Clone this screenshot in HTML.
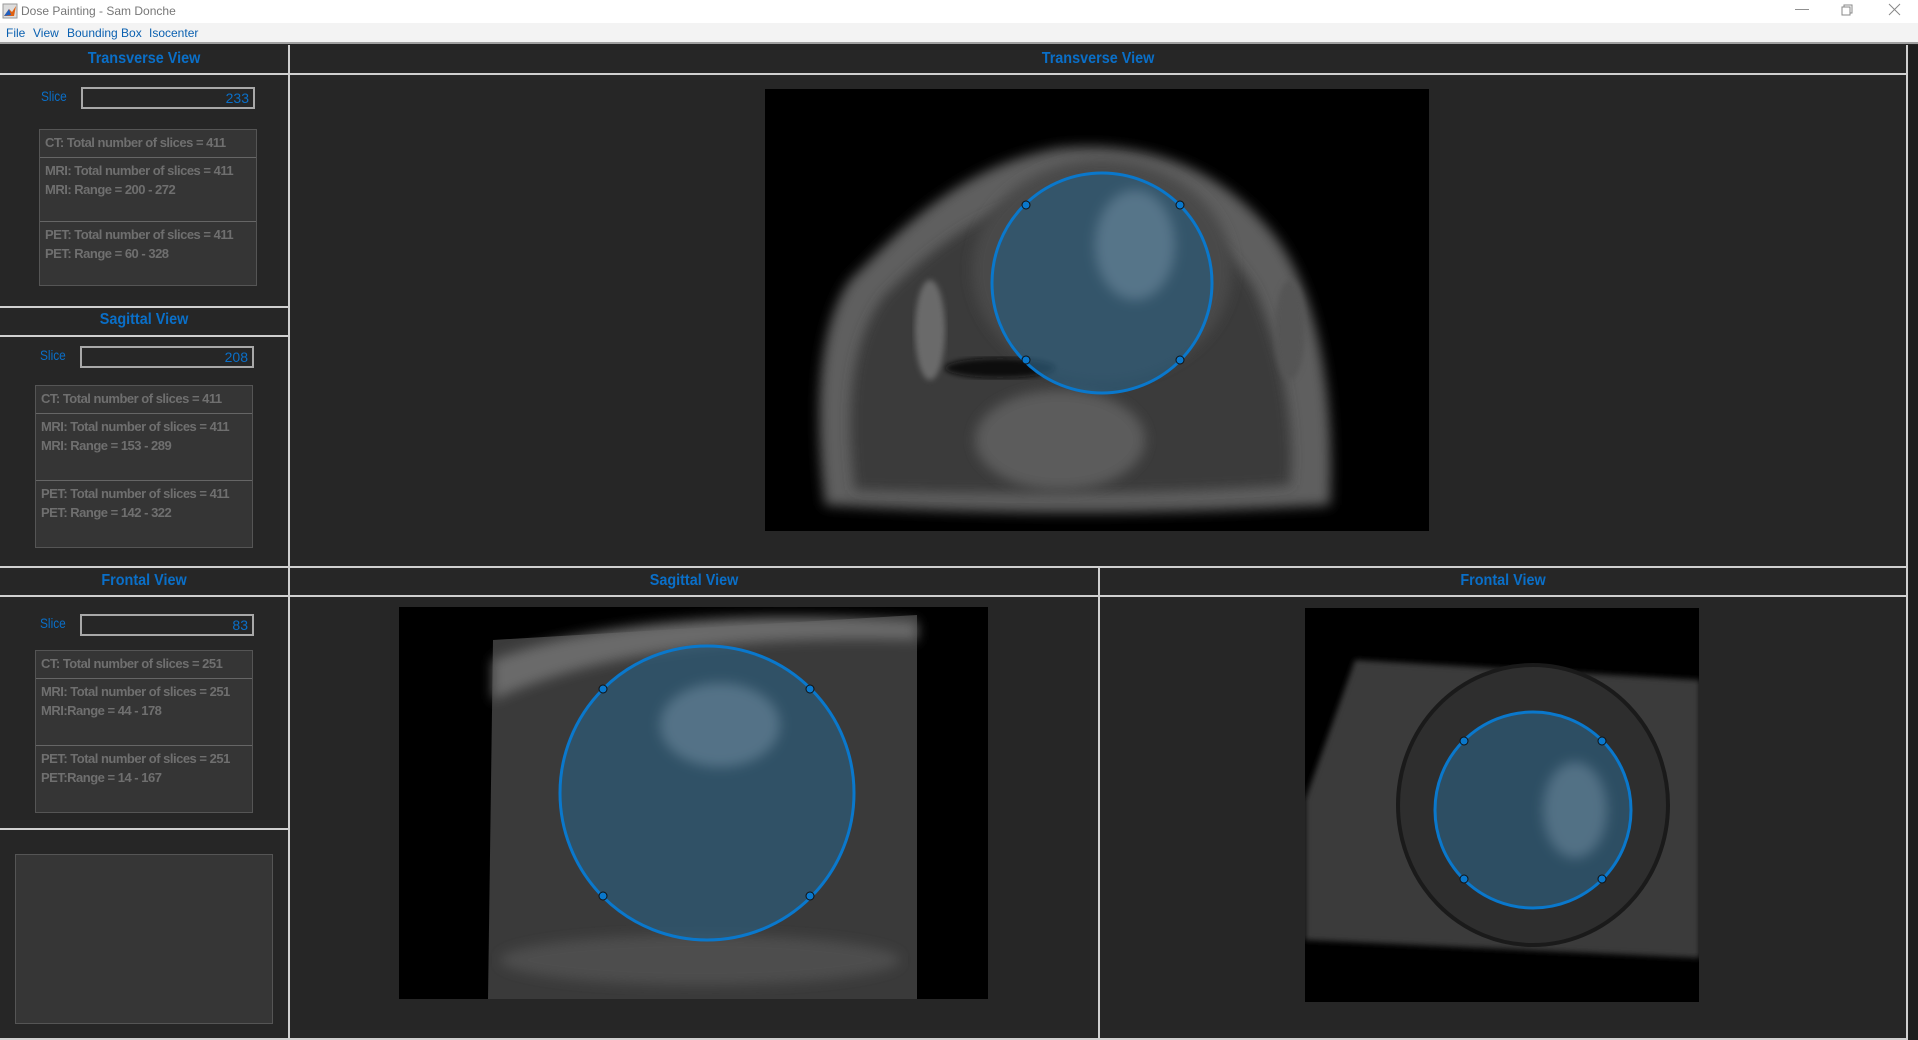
<!DOCTYPE html>
<html><head><meta charset="utf-8"><style>
*{margin:0;padding:0;box-sizing:border-box}
body{width:1918px;height:1040px;background:#262626;position:relative;overflow:hidden;font-family:"Liberation Sans",sans-serif}
.abs{position:absolute}
.title{left:0;top:0;width:1918px;height:23px;background:#fff;font-size:12px;color:#777;}
.menu{left:0;top:23px;width:1918px;height:21px;background:#f3f3f3;border-bottom:2px solid #a0a0a0;font-size:12px;color:#0a60b0}
.hl{position:absolute;height:2px;background:#d0d0d0}
.vl{position:absolute;width:2px;background:#d0d0d0}
.hdr{position:absolute;color:#0a6fc8;font-weight:bold;font-size:16px;text-align:center;transform:scaleX(0.9)}
.slice{position:absolute;color:#0a6fc8;font-size:14px;transform:scaleX(.85);transform-origin:left}
.inp{position:absolute;border:2px solid #a8a8a8;color:#0a6fc8;font-size:14px;text-align:right;padding-right:4px;line-height:18px}
.box{position:absolute;background:#353535;border:1px solid #555;color:#6f6f6f;font-weight:bold;font-size:13px;}
.box div{border-bottom:1px solid #666;padding:3px 0 0 5px;line-height:19px;white-space:nowrap;letter-spacing:-.5px}
.box div:last-child{border-bottom:none}
</style></head><body>
<div class="abs title"><svg class="abs" style="left:2px;top:3px" width="16" height="16"><rect x="1" y="1" width="14" height="14" fill="#ddd" stroke="#999"/><path d="M2 13 L7 6 L10 9 L14 3 L12 13Z" fill="#e06010"/><path d="M2 13 L7 6 L9 12Z" fill="#2060c0"/></svg><span class="abs" style="left:21px;top:4px">Dose Painting - Sam Donche</span>
<span class="abs" style="left:1795px;top:0;font-size:14px;color:#888">—</span>
<svg class="abs" style="left:1841px;top:4px" width="12" height="12"><rect x="1" y="3" width="8" height="8" fill="none" stroke="#888"/><path d="M3 3V1H11V9H9" fill="none" stroke="#888"/></svg>
<svg class="abs" style="left:1888px;top:3px" width="13" height="13"><path d="M1 1L12 12M12 1L1 12" stroke="#888"/></svg></div>
<div class="abs menu"><span class="abs" style="left:6px;top:3px">File</span><span class="abs" style="left:33px;top:3px">View</span><span class="abs" style="left:67px;top:3px">Bounding Box</span><span class="abs" style="left:149px;top:3px">Isocenter</span></div>

<div class="vl" style="left:288px;top:45px;height:995px"></div>
<div class="vl" style="left:1906px;top:45px;height:995px"></div>
<div class="vl" style="left:1098px;top:566px;height:474px"></div>
<div class="hl" style="left:0;top:73px;width:1908px"></div>
<div class="hl" style="left:0;top:306px;width:289px"></div>
<div class="hl" style="left:0;top:335px;width:289px"></div>
<div class="hl" style="left:0;top:566px;width:1908px"></div>
<div class="hl" style="left:0;top:595px;width:1908px"></div>
<div class="hl" style="left:0;top:828px;width:289px"></div>
<div class="hl" style="left:0;top:1038px;width:1908px"></div>
<div class="abs" style="left:1908px;top:45px;width:10px;height:995px;background:#1e1e1e"></div>

<div class="hdr" style="left:0;top:50px;width:288px">Transverse View</div>
<div class="hdr" style="left:0;top:311px;width:288px">Sagittal View</div>
<div class="hdr" style="left:0;top:572px;width:288px">Frontal View</div>
<div class="hdr" style="left:290px;top:50px;width:1616px">Transverse View</div>
<div class="hdr" style="left:290px;top:572px;width:808px">Sagittal View</div>
<div class="hdr" style="left:1100px;top:572px;width:806px">Frontal View</div>

<div class="slice" style="left:41px;top:88px">Slice</div>
<div class="inp" style="left:81px;top:87px;width:174px;height:22px">233</div>
<div class="box" style="left:39px;top:129px;width:218px;height:157px"><div style="height:28px">CT: Total number of slices = 411</div><div style="height:64px">MRI: Total number of slices = 411<br>MRI: Range = 200 - 272</div><div>PET: Total number of slices = 411<br>PET: Range = 60 - 328</div></div>

<div class="slice" style="left:40px;top:347px">Slice</div>
<div class="inp" style="left:80px;top:346px;width:174px;height:22px">208</div>
<div class="box" style="left:35px;top:385px;width:218px;height:163px"><div style="height:28px">CT: Total number of slices = 411</div><div style="height:67px">MRI: Total number of slices = 411<br>MRI: Range = 153 - 289</div><div>PET: Total number of slices = 411<br>PET: Range = 142 - 322</div></div>

<div class="slice" style="left:40px;top:615px">Slice</div>
<div class="inp" style="left:80px;top:614px;width:174px;height:22px">83</div>
<div class="box" style="left:35px;top:650px;width:218px;height:163px"><div style="height:28px">CT: Total number of slices = 251</div><div style="height:67px">MRI: Total number of slices = 251<br>MRI:Range = 44 - 178</div><div>PET: Total number of slices = 251<br>PET:Range = 14 - 167</div></div>

<div class="abs" style="left:15px;top:854px;width:258px;height:170px;background:#363636;border:1px solid #555"></div>

<svg class="abs" style="left:0;top:0" width="1918" height="1040">
<defs>
<filter id="b" x="-20%" y="-20%" width="140%" height="140%"><feGaussianBlur stdDeviation="6"/></filter>
<filter id="b2"><feGaussianBlur stdDeviation="3"/></filter>
<clipPath id="c1"><rect x="765" y="89" width="664" height="442"/></clipPath>
<clipPath id="c2"><rect x="399" y="607" width="589" height="392"/></clipPath>
<clipPath id="c3"><rect x="1305" y="608" width="394" height="394"/></clipPath>
</defs>
<rect x="765" y="89" width="664" height="442" fill="#000"/>
<g clip-path="url(#c1)">
<path d="M825 505 C815 420 815 330 850 280 C900 230 960 165 1060 148 C1150 140 1220 170 1270 230 C1320 290 1335 400 1330 505 C1150 515 1000 515 825 505Z" fill="#5e5e5e" filter="url(#b)"/>
<path d="M855 490 C845 410 850 340 885 295 C930 250 990 200 1070 192 C1150 190 1220 230 1255 290 C1285 360 1295 430 1290 485 C1150 495 1000 495 855 490Z" fill="#3a3a3a" filter="url(#b)"/>
<ellipse cx="1060" cy="440" rx="85" ry="50" fill="#5c5c5c" filter="url(#b)"/>
<ellipse cx="1102" cy="270" rx="130" ry="110" fill="#4a4a4a" filter="url(#b)"/>
<ellipse cx="1000" cy="368" rx="55" ry="10" fill="#080808" filter="url(#b2)"/>
<ellipse cx="930" cy="330" rx="15" ry="50" fill="#6a6a6a" filter="url(#b2)"/>
<ellipse cx="1290" cy="330" rx="15" ry="50" fill="#555" filter="url(#b2)"/>
</g>
<ellipse cx="1102" cy="283" rx="110" ry="110" fill="#2e5a76" fill-opacity=".75"/>
<ellipse cx="1135" cy="245" rx="40" ry="55" fill="#8aa6b8" fill-opacity=".4" filter="url(#b)"/>
<ellipse cx="1102" cy="283" rx="110" ry="110" fill="none" stroke="#0a78cc" stroke-width="3"/>
<g fill="#0a78cc" stroke="#111" stroke-width="1"><circle cx="1026" cy="205" r="4"/><circle cx="1180" cy="205" r="4"/><circle cx="1026" cy="360" r="4"/><circle cx="1180" cy="360" r="4"/></g>

<rect x="399" y="607" width="589" height="392" fill="#000"/>
<g clip-path="url(#c2)">
<path d="M493 640 L917 615 L917 999 L488 999Z" fill="#3a3a3a"/>
<path d="M493 660 C600 620 750 610 917 622 L917 640 C750 635 600 650 493 700Z" fill="#6a6a6a" filter="url(#b)"/>
<ellipse cx="700" cy="960" rx="200" ry="25" fill="#4e4e4e" filter="url(#b)"/>
</g>
<ellipse cx="707" cy="793" rx="147" ry="147" fill="#2e5a76" fill-opacity=".75"/>
<ellipse cx="720" cy="725" rx="60" ry="42" fill="#8aa6b8" fill-opacity=".4" filter="url(#b)"/>
<ellipse cx="707" cy="793" rx="147" ry="147" fill="none" stroke="#0a78cc" stroke-width="3"/>
<g fill="#0a78cc" stroke="#111" stroke-width="1"><circle cx="603" cy="689" r="4"/><circle cx="810" cy="689" r="4"/><circle cx="603" cy="896" r="4"/><circle cx="810" cy="896" r="4"/></g>

<rect x="1305" y="608" width="394" height="394" fill="#000"/>
<g clip-path="url(#c3)">
<path d="M1355 660 L1700 680 L1700 958 L1305 940 L1305 800Z" fill="#3a3a3a" filter="url(#b2)"/>
<ellipse cx="1533" cy="805" rx="135" ry="140" fill="#2e2e2e" stroke="#1a1a1a" stroke-width="4"/>
</g>
<ellipse cx="1533" cy="810" rx="98" ry="98" fill="#2e5a76" fill-opacity=".75"/>
<ellipse cx="1575" cy="810" rx="32" ry="48" fill="#8aa6b8" fill-opacity=".4" filter="url(#b)"/>
<ellipse cx="1533" cy="810" rx="98" ry="98" fill="none" stroke="#0a78cc" stroke-width="3"/>
<g fill="#0a78cc" stroke="#111" stroke-width="1"><circle cx="1464" cy="741" r="4"/><circle cx="1602" cy="741" r="4"/><circle cx="1464" cy="879" r="4"/><circle cx="1602" cy="879" r="4"/></g>
</svg>
</body></html>
